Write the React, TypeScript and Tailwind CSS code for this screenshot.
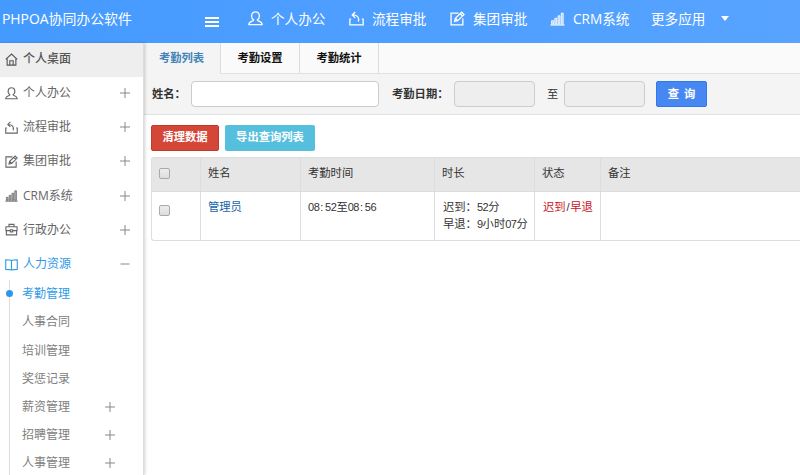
import type { ReactNode } from "react";

type IconName = "home" | "user" | "flow" | "edit" | "chart" | "bag" | "book";

const icons: Record<IconName, ReactNode> = {
  home: (
    <>
      <path d="M.8 6.800 7 1.200l6.200 5.600M2.300 5.800V13h9.400V5.800" />
      <path d="M5.200 13V8.400h3.600V13" />
    </>
  ),
  user: (
    <path d="M5.300 8.300C2.300 6.500 2.800.8 7 .8s4.700 5.700 1.700 7.500c-.3 1.500 4.500.9 4.500 4.400H.8c0-3.500 4.800-2.900 4.500-4.400z" />
  ),
  flow: (
    <>
      <path d="M2 7.500H.8V13h12.400V7.500H12" />
      <path d="M5.800 1 3 3.700l2.800 2.700M3.200 3.700c4.500 0 6.500 2 5.600 6.300" />
    </>
  ),
  edit: (
    <>
      <path d="M8 2H1v11h11V7" />
      <path d="m4.300 9.800.7-3 5.900-5.700 2.200 2.200-5.900 5.800zM9.500 2.500l2.200 2.200M5 6.800l2.200 2.300" />
    </>
  ),
  chart: (
    <>
      <path d="M.5 13h13" />
      <path
        d="M1.500 9h1.800v3H1.500zM4.500 6.800h1.800V12H4.500zM7.500 4.500h1.800V12H7.500zM10.500 2h1.800v10h-1.800z"
        fill="currentColor"
        fillOpacity=".5"
        strokeWidth=".8"
      />
    </>
  ),
  bag: (
    <>
      <path d="M1 4h12v4.200H1zM1.500 8v4.800h11V8M4.300 4V1.500h5.400V4" />
      <path d="M5.700 7.200h2.600v2.300H5.700z" fill="#fff" />
    </>
  ),
  book: <path d="M7 2.800C5.500 1.900 3 1.900.8 1.900v10.300c2.200 0 4.700 0 6.200.7 1.500-.7 4-.7 6.200-.7V1.900C11 1.900 8.500 1.900 7 2.800zv10" />,
};

const Icon = ({ name, className }: { name: IconName; className: string }) => (
  <svg viewBox="0 0 14 14" className={className} fill="none" stroke="currentColor" strokeWidth="1.200">
    {icons[name]}
  </svg>
);

const Toggle = ({ open = false }: { open?: boolean }) => (
  <svg viewBox="0 0 10 10" className="h-[10px] w-[10px] text-[#888]" stroke="currentColor" strokeWidth="1">
    <path d={open ? "M.5 5h9" : "M0 5h10M5 0v10"} />
  </svg>
);

const topNav: { icon: IconName; label: string; width: string }[] = [
  { icon: "user", label: "个人办公", width: "w-[101px]" },
  { icon: "flow", label: "流程审批", width: "w-[101px]" },
  { icon: "edit", label: "集团审批", width: "w-[100px]" },
  { icon: "chart", label: "CRM系统", width: "w-[101px]" },
];

const menu: { icon: IconName; label: string }[] = [
  { icon: "user", label: "个人办公" },
  { icon: "flow", label: "流程审批" },
  { icon: "edit", label: "集团审批" },
  { icon: "chart", label: "CRM系统" },
  { icon: "bag", label: "行政办公" },
];

const subMenu = [
  { label: "考勤管理", active: true },
  { label: "人事合同" },
  { label: "培训管理" },
  { label: "奖惩记录" },
  { label: "薪资管理", more: true },
  { label: "招聘管理", more: true },
  { label: "人事管理", more: true },
];

const Num = ({ children }: { children: ReactNode }) => (
  <span className="font-['Liberation_Sans',sans-serif] text-[11px] leading-none tracking-[-0.45px]">{children}</span>
);

const Time = ({ h, m }: { h: string; m: string }) => (
  <Num>
    {h}
    <span className="mr-[2.200px] ml-[0.900px]">:</span>
    {m}
  </Num>
);

const Checkbox = () => (
  <span className="block h-[11px] w-[11px] rounded-[2px] border border-[#aaa] bg-linear-to-b from-[#eee] to-[#ddd]" />
);

const Header = () => (
  <header className="flex h-[43px] shrink-0 items-center bg-linear-to-r from-[#459aff] to-[#57a3ff] pb-[5px] text-[13.600px] whitespace-nowrap text-white">
    <div className="w-[205px] pl-[2px] text-[13.900px]">PHPOA协同办公软件</div>
    <div className="mt-[6px] flex w-[43px] flex-col gap-[2px]">
      <span className="h-[2px] w-[14px] bg-white" />
      <span className="h-[2px] w-[14px] bg-white" />
      <span className="h-[2px] w-[14px] bg-white" />
    </div>
    {topNav.map((item) => (
      <div key={item.label} className={`flex shrink-0 items-center ${item.width}`}>
        <Icon name={item.icon} className="mr-[8px] h-[15px] w-[15px]" />
        {item.label}
      </div>
    ))}
    <div className="flex items-center">
      更多应用
      <span className="ml-[16px] border-x-[4.500px] border-t-[5px] border-x-transparent border-t-white" />
    </div>
  </header>
);

const Sidebar = () => (
  <aside className="z-10 w-[144px] shrink-0 border-r border-[#ddd] bg-white text-[12px] text-[#666] shadow-[1px_0_3px_rgba(0,0,0,0.18)]">
    <div className="flex h-[34px] items-center bg-[#eee] pb-[2px] pl-[5px] font-medium text-[#555]">
      <Icon name="home" className="mr-[5px] h-[13px] w-[13px]" />
      个人桌面
    </div>
    {menu.map((item) => (
      <div key={item.label} className="flex h-[34.2px] items-center pr-[13px] pb-[2px] pl-[5px]">
        <Icon name={item.icon} className="mr-[5px] h-[13px] w-[13px]" />
        <span className="flex-1">{item.label}</span>
        <Toggle />
      </div>
    ))}
    <div className="flex h-[34.2px] items-center pr-[13px] pb-[2px] pl-[5px] text-[#2f9be8]">
      <Icon name="book" className="mr-[5px] h-[13px] w-[13px]" />
      <span className="flex-1">人力资源</span>
      <Toggle open />
    </div>
    <ul className="-mt-[2px] ml-[9px] border-l border-[#ddd]">
      {subMenu.map((item) => (
        <li
          key={item.label}
          className={`relative flex h-[28.2px] items-center pr-[28px] pl-[12px] ${item.active ? "text-[#2f9be8]" : "text-[#808080]"}`}
        >
          {item.active && <span className="absolute top-[10px] -left-[4px] h-[7px] w-[7px] rounded-full bg-[#2f96e8]" />}
          <span className="flex-1">{item.label}</span>
          {item.more && <Toggle />}
        </li>
      ))}
    </ul>
  </aside>
);

const App = () => {
  return (
    <div className="flex h-[475px] w-[800px] flex-col overflow-hidden bg-white font-['Open_Sans','Noto_Sans_CJK_SC',sans-serif]">
      <Header />
      <div className="flex min-h-0 flex-1">
        <Sidebar />
        <main className="min-w-0 flex-1 font-['Noto_Sans_CJK_SC',sans-serif] text-[11.300px] text-[#333]">
          {/* Tabs */}
          <div className="flex h-[31px] border-b border-[#e2e2e2] bg-[#fafafa] font-bold text-[#111]">
            <div className="-mb-px flex w-[77px] items-center justify-center border-r border-[#ddd] bg-[#f4f4f4] pr-px pb-[2px] text-[#4383b8]">
              考勤列表
            </div>
            <div className="flex w-[79px] items-center justify-center border-r border-[#ddd] pb-px">考勤设置</div>
            <div className="flex w-[79px] items-center justify-center border-r border-[#ddd] pb-px">考勤统计</div>
          </div>

          {/* Search bar */}
          <div className="flex h-[41px] items-center border-b border-[#e2e2e2] bg-[#f4f4f4] pl-[8px]">
            <span className="w-[39px] pb-[2px] font-bold whitespace-nowrap">姓名：</span>
            <span className="h-[26px] w-[188px] rounded-[4px] border border-[#ccc] bg-white" />
            <span className="ml-[13px] w-[62px] pb-[2px] font-bold whitespace-nowrap">考勤日期：</span>
            <span className="h-[26px] w-[81px] rounded-[4px] border border-[#ccc] bg-[#eee]" />
            <span className="w-[29px] pb-[2px] pl-[12px]">至</span>
            <span className="h-[26px] w-[81px] rounded-[4px] border border-[#ccc] bg-[#eee]" />
            <span className="ml-[11px] flex h-[26px] w-[51px] items-center justify-center rounded-[2px] border border-[#3079ed] bg-[#4787f2] pb-[2px] font-bold whitespace-pre text-white">
              {"查  询"}
            </span>
          </div>

          <div className="flex gap-[6px] pt-[10px] pl-[7px] font-bold text-white">
            <span className="flex h-[26px] w-[68px] items-center justify-center rounded-[2px] border border-[#c5392b] bg-[#d44637] pb-[3px]">
              清理数据
            </span>
            <span className="flex h-[26px] w-[90px] items-center justify-center rounded-[2px] bg-[#57bfde] pb-[3px]">
              导出查询列表
            </span>
          </div>

          {/* Attendance table */}
          <div className="mt-[6px] ml-[7px] rounded-l-[3px] border border-r-0 border-[#ddd] leading-[17px]">
            <div className="grid h-[34px] grid-cols-[49px_100px_134px_100px_66px_1fr] divide-x divide-[#ddd] border-b border-[#ddd] bg-[#e6e6e6]">
              <div className="pt-[10px] pl-[7px]">
                <Checkbox />
              </div>
              <div className="pt-[6px] pl-[7px]">姓名</div>
              <div className="pt-[6px] pl-[7px]">考勤时间</div>
              <div className="pt-[6px] pl-[7px]">时长</div>
              <div className="pt-[6px] pl-[7px]">状态</div>
              <div className="pt-[6px] pl-[7px]">备注</div>
            </div>
            <div className="grid h-[48px] grid-cols-[49px_100px_134px_100px_66px_1fr] divide-x divide-[#ddd]">
              <div className="pt-[13px] pl-[7px]">
                <Checkbox />
              </div>
              <div className="pt-[6px] pl-[7px] text-[#1565a8]">管理员</div>
              <div className="pt-[6px] pl-[7px]">
                <Time h="08" m="52" />至<Time h="08" m="56" />
              </div>
              <div className="pt-[6px] pl-[8px] whitespace-nowrap">
                迟到：<Num>52</Num>分
                <br />
                早退：<Num>9</Num>小时<Num>07</Num>分
              </div>
              <div className="pt-[6px] pl-[8px] whitespace-nowrap text-[#c8141c]">
                迟到<span className="mx-px text-[#333]"><Num>/</Num></span>早退
              </div>
              <div />
            </div>
          </div>
        </main>
      </div>
    </div>
  );
};

export default App;
